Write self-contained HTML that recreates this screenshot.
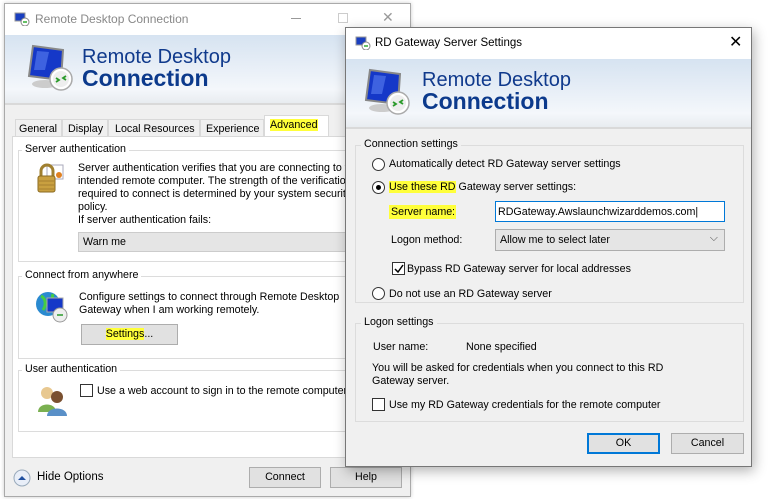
<!DOCTYPE html>
<html><head><meta charset="utf-8"><style>
*{box-sizing:border-box;margin:0;padding:0}
body{width:768px;height:499px;overflow:hidden;background:#fff;font-family:"Liberation Sans",sans-serif;font-size:10.7px;color:#000;position:relative}
.a{position:absolute;white-space:nowrap}
.win{position:absolute;background:#f0f0f0;border:1px solid #aaa}
.tb{position:absolute;left:0;right:0;top:0;background:#fff}
.ban{position:absolute;left:0;right:0;background:linear-gradient(#d6e3f1,#f4f7fb 80%,#e8ecf0);border-bottom:2px solid #d9d9d9}
.t1{font-size:20px;color:#103a8c}
.t2{font-size:23px;color:#0c3a8c;font-weight:bold}
.grp{position:absolute;border:1px solid #dcdcdc}
.lg{position:absolute;top:-8px;left:6px;padding:0 3px}
.btn{position:absolute;background:#e1e1e1;border:1px solid #adadad;text-align:center;line-height:18px}
.rad{position:absolute;width:13px;height:13px;border:1px solid #333;border-radius:50%;background:#fff}
.chk{position:absolute;width:13px;height:13px;border:1px solid #333;background:#fff}
.hl{background:#ffff3a}
</style></head><body>
<div class="win" style="left:4px;top:3px;width:407px;height:494px;box-shadow:0 0 4px rgba(0,0,0,.2)">
 <div class="tb" style="height:31px"></div>
 <svg class="a" style="left:9px;top:8px" width="16" height="14"><rect x="1" y="1" width="10" height="8" fill="#1a3fc0" stroke="#999"/><circle cx="11" cy="10" r="4" fill="#fff" stroke="#888"/><path d="M9 10h4" stroke="#3a3" stroke-width="1.5"/></svg>
 <div class="a" style="left:30px;top:8px;font-size:12px;color:#888">Remote Desktop Connection</div>
 <div class="a" style="left:286px;top:14px;width:10px;height:1px;background:#999"></div>
 <div class="a" style="left:333px;top:9px;width:10px;height:10px;border:1px solid #ccc"></div>
 <div class="a" style="left:377px;top:5px;color:#999;font-size:14px">✕</div>
 <div class="ban" style="top:31px;height:70px"></div>
 <svg class="a" style="left:18px;top:38px" width="56" height="52"><path d="M10 4 L40 8 L38 38 L6 34Z" fill="#1538c8" stroke="#888" stroke-width="2"/><path d="M14 9 L26 10 L22 28 L11 28Z" fill="#5a7ff0" opacity=".6"/><ellipse cx="22" cy="42" rx="13" ry="4" fill="#ccc"/><circle cx="38" cy="37" r="11" fill="#fff" stroke="#aaa" stroke-width="1.5"/><circle cx="38" cy="37" r="8" fill="#eee"/><path d="M33 36l3 2-3 2M43 34l-3 2 3 2" stroke="#2a9a2a" stroke-width="1.8" fill="none"/></svg>
 <div class="a t1" style="left:77px;top:42px">Remote Desktop</div>
 <div class="a t2" style="left:77px;top:61px">Connection</div>
 <div class="a" style="left:10px;top:115px;width:47px;height:18px;border:1px solid #d9d9d9;background:#f0f0f0;padding:3px 3px">General</div>
 <div class="a" style="left:57px;top:115px;width:46px;height:18px;border:1px solid #d9d9d9;background:#f0f0f0;padding:3px 5px">Display</div>
 <div class="a" style="left:103px;top:115px;width:92px;height:18px;border:1px solid #d9d9d9;background:#f0f0f0;padding:3px 6px">Local Resources</div>
 <div class="a" style="left:195px;top:115px;width:64px;height:18px;border:1px solid #d9d9d9;background:#f0f0f0;padding:3px 5px">Experience</div>
 <div class="a" style="left:259px;top:111px;width:65px;height:22px;border:1px solid #d9d9d9;border-bottom:none;background:#fff;padding:3px 5px"><span class="hl">Advanced</span></div>
 <div class="a" style="left:7px;top:132px;width:400px;height:322px;background:#fff;border:1px solid #d9d9d9"></div>
 <div class="grp" style="left:13px;top:146px;width:400px;height:112px"><div class="lg" style="background:#fff;left:3px">Server authentication</div></div>
 <svg class="a" style="left:30px;top:157px" width="30" height="36"><rect x="12" y="4" width="16" height="14" fill="#fff" stroke="#aab"/><circle cx="24" cy="14" r="3" fill="#e08020"/><path d="M6 16v-6a6 6 0 0 1 12 0v6" fill="none" stroke="#a08030" stroke-width="3"/><rect x="3" y="15" width="17" height="16" rx="2" fill="#c9a040" stroke="#8a6a20"/><path d="M4 20h15M4 24h15M4 28h15" stroke="#a88030"/></svg>
 <div class="a" style="left:73px;top:158px;line-height:13px">Server authentication verifies that you are connecting to t<br>intended remote computer. The strength of the verification<br>required to connect is determined by your system security<br>policy.<br>If server authentication fails:</div>
 <div class="a" style="left:73px;top:228px;width:330px;height:20px;background:#e5e5e5;border:1px solid #ccc;padding:3px 4px">Warn me</div>
 <div class="grp" style="left:13px;top:272px;width:400px;height:83px"><div class="lg" style="background:#fff;left:3px">Connect from anywhere</div></div>
 <svg class="a" style="left:30px;top:286px" width="36" height="36"><circle cx="13" cy="14" r="12" fill="#2a8ad0"/><path d="M6 6c4 2 6 8 2 14M18 4c-2 6 2 10 6 10" stroke="#4c4" stroke-width="3" fill="none"/><rect x="12" y="8" width="16" height="14" fill="#1538c8" stroke="#aaa"/><circle cx="25" cy="25" r="7" fill="#eee" stroke="#999"/><path d="M22 25h6" stroke="#2a9a2a" stroke-width="1.5"/></svg>
 <div class="a" style="left:74px;top:287px;line-height:13px">Configure settings to connect through Remote Desktop<br>Gateway when I am working remotely.</div>
 <div class="btn" style="left:76px;top:320px;width:97px;height:21px"><span class="hl">Settings</span>...</div>
 <div class="grp" style="left:13px;top:366px;width:400px;height:62px"><div class="lg" style="background:#fff;left:3px">User authentication</div></div>
 <svg class="a" style="left:30px;top:380px" width="36" height="32"><circle cx="12" cy="9" r="6" fill="#e8c890"/><path d="M3 28c0-10 18-10 18 0Z" fill="#7ab050"/><circle cx="22" cy="13" r="6" fill="#7a5030"/><path d="M12 32c0-10 20-10 20 0Z" fill="#5a90c8"/></svg>
 <div class="chk" style="left:75px;top:380px"></div>
 <div class="a" style="left:92px;top:381px">Use a web account to sign in to the remote computer</div>
 <svg class="a" style="left:8px;top:465px" width="18" height="18"><circle cx="9" cy="9" r="8" fill="#e8eef8" stroke="#9ab"/><path d="M5 11l4-4 4 4Z" fill="#2050a0"/></svg>
 <div class="a" style="left:32px;top:467px;font-size:11.5px">Hide Options</div>
 <div class="btn" style="left:244px;top:463px;width:72px;height:21px">Connect</div>
 <div class="btn" style="left:325px;top:463px;width:72px;height:21px">Help</div>
</div>
<div class="win" style="left:345px;top:27px;width:407px;height:440px;border-color:#777;box-shadow:2px 4px 12px rgba(0,0,0,.3)">
 <div class="tb" style="height:31px"></div>
 <svg class="a" style="left:9px;top:8px" width="16" height="14"><rect x="1" y="1" width="10" height="8" fill="#1a3fc0" stroke="#999"/><circle cx="11" cy="10" r="4" fill="#fff" stroke="#888"/><path d="M9 10h4" stroke="#3a3" stroke-width="1.5"/></svg>
 <div class="a" style="left:29px;top:9px;font-size:11.5px">RD Gateway Server Settings</div>
 <div class="a" style="left:383px;top:4px;font-size:16px">✕</div>
 <div class="ban" style="top:31px;height:70px"></div>
 <svg class="a" style="left:14px;top:38px" width="56" height="52"><path d="M10 4 L40 8 L38 38 L6 34Z" fill="#1538c8" stroke="#888" stroke-width="2"/><path d="M14 9 L26 10 L22 28 L11 28Z" fill="#5a7ff0" opacity=".6"/><ellipse cx="22" cy="42" rx="13" ry="4" fill="#ccc"/><circle cx="38" cy="37" r="11" fill="#fff" stroke="#aaa" stroke-width="1.5"/><circle cx="38" cy="37" r="8" fill="#eee"/><path d="M33 36l3 2-3 2M43 34l-3 2 3 2" stroke="#2a9a2a" stroke-width="1.8" fill="none"/></svg>
 <div class="a t1" style="left:76px;top:41px">Remote Desktop</div>
 <div class="a t2" style="left:76px;top:60px">Connection</div>
 <div class="grp" style="left:9px;top:117px;width:389px;height:158px"><div class="lg" style="background:#f0f0f0;left:5px">Connection settings</div></div>
 <div class="rad" style="left:26px;top:130px"></div><div class="a" style="left:43px;top:130px">Automatically detect RD Gateway server settings</div>
 <div class="rad" style="left:26px;top:153px"><div style="position:absolute;left:3px;top:3px;width:5px;height:5px;border-radius:50%;background:#000"></div></div><div class="a" style="left:43px;top:153px"><span class="hl">Use these RD</span> Gateway server settings:</div>
 <div class="a hl" style="left:43px;top:177px;padding:1px 4px 1px 2px">Server name</div><div class="a" style="left:106px;top:178px">:</div>
 <div class="a" style="left:149px;top:173px;width:230px;height:21px;background:#fff;border:1px solid #0078d7;padding:4px 2px">RDGateway.Awslaunchwizarddemos.com|</div>
 <div class="a" style="left:45px;top:206px">Logon method:</div>
 <div class="a" style="left:149px;top:201px;width:230px;height:22px;background:#e5e5e5;border:1px solid #adadad;padding:4px 4px">Allow me to select later<span style="position:absolute;right:6px;top:2px;color:#555">⌵</span></div>
 <div class="chk" style="left:46px;top:234px"><svg width="11" height="11" style="position:absolute;left:0;top:0"><path d="M2 6l3 3 5-7" stroke="#000" stroke-width="1.5" fill="none"/></svg></div><div class="a" style="left:61px;top:235px">Bypass RD Gateway server for local addresses</div>
 <div class="rad" style="left:26px;top:259px"></div><div class="a" style="left:43px;top:260px">Do not use an RD Gateway server</div>
 <div class="grp" style="left:9px;top:295px;width:389px;height:99px"><div class="lg" style="background:#f0f0f0;left:5px">Logon settings</div></div>
 <div class="a" style="left:27px;top:313px">User name:</div><div class="a" style="left:120px;top:313px">None specified</div>
 <div class="a" style="left:26px;top:334px;line-height:13px">You will be asked for credentials when you connect to this RD<br>Gateway server.</div>
 <div class="chk" style="left:26px;top:370px"></div><div class="a" style="left:43px;top:371px">Use my RD Gateway credentials for the remote computer</div>
 <div class="btn" style="left:241px;top:405px;width:73px;height:21px;border:2px solid #0078d7;line-height:17px">OK</div>
 <div class="btn" style="left:325px;top:405px;width:73px;height:21px">Cancel</div>
</div>
</body></html>
